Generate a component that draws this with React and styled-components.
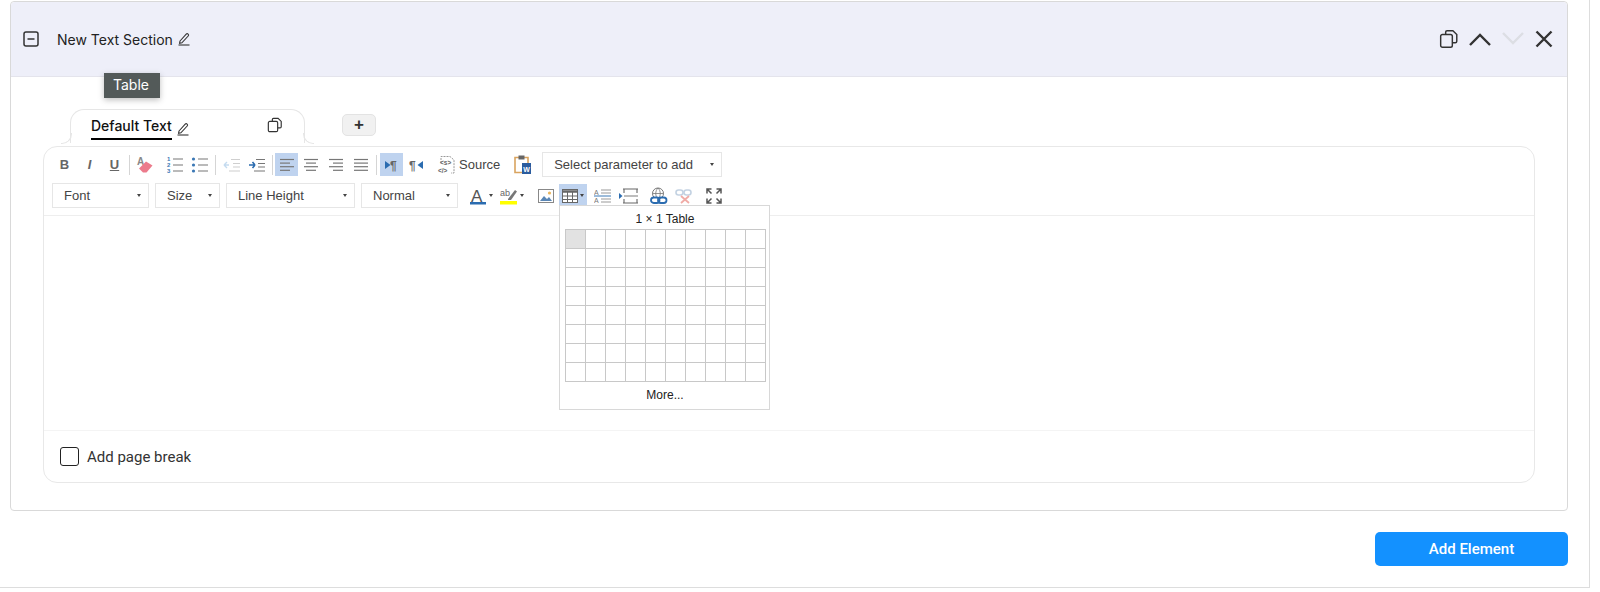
import React from "react";
import styled, { createGlobalStyle } from "styled-components";

const GlobalStyle = createGlobalStyle`
  html, body { margin: 0; padding: 0; background: #fff; }
  body { font-family: Inter, "Liberation Sans", sans-serif; color: #222; }
  * { box-sizing: border-box; }
`;

const PencilIcon = () => (
  <svg width="14" height="14" viewBox="0 0 14 14" fill="none" stroke="#333" strokeWidth="1.1">
    <path d="M3 9 9.2 2.2a1.3 1.3 0 0 1 2 1.8L4.9 10.8 2.6 11.2z" />
    <path d="M1.5 13h11" />
  </svg>
);

const CopyIcon = ({ size = 20 }) => (
  <svg width={size} height={size} viewBox="0 0 18 18" fill="none" stroke="#333" strokeWidth="1.3">
    <path d="M6 5V2.8A1.3 1.3 0 0 1 7.3 1.5h5.2L16 5v6a1.3 1.3 0 0 1-1.3 1.3H12" />
    <rect x="1.5" y="5" width="10.5" height="11.5" rx="1.6" />
  </svg>
);

const Chevron = ({ up, color }) => (
  <svg width="24" height="14" viewBox="0 0 24 14" fill="none" stroke={color} strokeWidth="2.4">
    <path d={up ? "M2 13 12 3l10 10" : "M2 1l10 10L22 1"} />
  </svg>
);

const CloseIcon = () => (
  <svg width="20" height="20" viewBox="0 0 20 20" fill="none" stroke="#333" strokeWidth="2.4">
    <path d="M2.5 2.5l15 15M17.5 2.5l-15 15" />
  </svg>
);

const CollapseIcon = () => (
  <svg width="16" height="16" viewBox="0 0 16 16" fill="none" stroke="#333" strokeWidth="1.5">
    <rect x="1" y="1" width="14" height="14" rx="2" />
    <path d="M4.5 8h7" />
  </svg>
);

const Lines = ({ rows }) => (
  <svg width="16" height="16" viewBox="0 0 16 16" stroke="#777" strokeWidth="1.2">
    {rows.map(([a, b], i) => (
      <path key={i} d={`M${a} ${2.5 + i * 3.6}H${b}`} />
    ))}
  </svg>
);

const EraserIcon = () => (
  <svg width="18" height="18" viewBox="0 0 18 18">
    <text x="1" y="9" fontSize="10" fontWeight="700" fill="#888" fontFamily="Liberation Sans">A</text>
    <path d="M3 12.5l7-7 6.5 4-6 7H7z" fill="#ec7b8c" />
  </svg>
);

const OrderedIcon = () => (
  <svg width="18" height="18" viewBox="0 0 18 18" stroke="#777" strokeWidth="1.2">
    <path d="M7 3h10M7 9h10M7 15h10" />
    <g fontSize="6" fontWeight="700" fill="#3b78b5" stroke="none" fontFamily="Liberation Sans">
      <text x="1" y="5">1</text>
      <text x="1" y="11">2</text>
      <text x="1" y="17">3</text>
    </g>
  </svg>
);

const BulletIcon = () => (
  <svg width="18" height="18" viewBox="0 0 18 18" stroke="#777" strokeWidth="1.2">
    <path d="M7 3h10M7 9h10M7 15h10" />
    <circle cx="2.5" cy="3" r="1.6" fill="#3b78b5" stroke="none" />
    <circle cx="2.5" cy="9" r="1.6" fill="#3b78b5" stroke="none" />
    <circle cx="2.5" cy="15" r="1.6" fill="#3b78b5" stroke="none" />
  </svg>
);

const IndentIcon = ({ out }) => (
  <svg width="18" height="16" viewBox="0 0 18 16" opacity={out ? 0.35 : 1}>
    <path d="M8 2.5h9M10 6.5h7M10 10h7M6 14h11" stroke="#777" strokeWidth="1.2" />
    {out ? (
      <path d="M6 8H1M1 8l3-3M1 8l3 3" stroke="#5a9bd5" strokeWidth="1.4" fill="none" />
    ) : (
      <path d="M1 8h6M7 8L4.5 5M7 8l-2.5 3" stroke="#2b6cb0" strokeWidth="1.6" fill="none" />
    )}
  </svg>
);

const BidiIcon = ({ rtl }) => (
  <svg width="16" height="16" viewBox="0 0 16 16">
    <text x={rtl ? 1 : 6} y="12.5" fontSize="12" fontWeight="700" fill="#666" fontFamily="Liberation Sans">¶</text>
    <path d={rtl ? "M15 4v8L9.5 8z" : "M1 4v8l5.5-4z"} fill="#2b6cb0" />
  </svg>
);

const SourceIcon = () => (
  <svg width="20" height="20" viewBox="0 0 20 20" fill="none" stroke="#999">
    <path d="M4 8V1.5h9L17 5v13H14" strokeDasharray="2 1" />
    <g fontSize="6.5" fontWeight="700" fill="#666" stroke="none" fontFamily="Liberation Sans">
      <text x="3" y="9.5">&lt;s&gt;</text>
      <text x="1" y="18">&lt;/&gt;</text>
    </g>
  </svg>
);

const PasteWordIcon = () => (
  <svg width="20" height="21" viewBox="0 0 20 21">
    <path d="M2 3.5h13v15H2z" fill="#fff" stroke="#d9a45f" strokeWidth="1.6" />
    <path d="M5.5 1.5h6v4h-6z" fill="#666" />
    <rect x="9" y="9" width="9" height="11" fill="#2b5c9e" />
    <text x="10.3" y="17.5" fontSize="7" fontWeight="700" fill="#fff" fontFamily="Liberation Sans">W</text>
  </svg>
);

const Caret = styled.span`
  display: inline-block;
  width: 0;
  height: 0;
  border-left: 2.5px solid transparent;
  border-right: 2.5px solid transparent;
  border-top: 3px solid #444;
`;

const TextColorIcon = () => (
  <svg width="18" height="18" viewBox="0 0 18 18">
    <text x="2" y="14.5" fontSize="17" fill="#555" fontFamily="Liberation Sans">A</text>
    <rect x="1" y="15" width="16" height="2.5" fill="#2b6cb0" />
  </svg>
);

const BgColorIcon = () => (
  <svg width="18" height="18" viewBox="0 0 18 18">
    <text x="0" y="9" fontSize="9" fill="#666" fontFamily="Liberation Sans">ab</text>
    <path d="M8 12 15 3l2 1.5L11 13H8z" fill="#777" />
    <rect x="0" y="14" width="17" height="3.5" fill="#ffff00" />
  </svg>
);

const ImageIcon = () => (
  <svg width="16" height="16" viewBox="0 0 16 16">
    <rect x=".5" y="1.5" width="15" height="13" fill="#fff" stroke="#888" />
    <path d="M2 13l4-5 3 3 2-2 3 4z" fill="#5a86b5" />
    <circle cx="11.5" cy="5" r="1.6" fill="#e9b65f" />
  </svg>
);

const TableIcon = () => (
  <svg width="16" height="14" viewBox="0 0 16 14" fill="none" stroke="#666">
    <rect x=".5" y=".5" width="15" height="13" fill="#fff" />
    <path d="M.5 2.5h15" strokeWidth="2.5" />
    <path d="M.5 7h15M.5 10.5h15M5.5 3v10M10.5 3v10" />
  </svg>
);

const LineHeightIcon = () => (
  <svg width="18" height="16" viewBox="0 0 18 16">
    <text x="0" y="7" fontSize="7" fill="#777" fontFamily="Liberation Sans">A</text>
    <text x="0" y="15" fontSize="7" fill="#777" fontFamily="Liberation Sans">A</text>
    <path d="M7 2h10M7 5h10M7 11h10M7 14h10" stroke="#999" />
    <path d="M0 8h17" stroke="#3b78b5" />
  </svg>
);

const PageBreakIcon = () => (
  <svg width="20" height="16" viewBox="0 0 20 16" fill="none" stroke="#666" strokeWidth="1.1">
    <path d="M4 1h15M4 15h15M5 1v4M18 1v4M5 11v4M18 11v4" />
    <path d="M0 5v6l3.5-3z" fill="#2b6cb0" stroke="none" />
    <path d="M5 8h14" stroke="#888" />
  </svg>
);

const LinkIcon = () => (
  <svg width="18" height="18" viewBox="0 0 18 18" fill="none">
    <circle cx="8" cy="6.5" r="5.5" stroke="#777" />
    <path d="M2.5 6.5h11M8 1c-3 3-3 8 0 11M8 1c3 3 3 8 0 11" stroke="#777" strokeWidth=".8" />
    <rect x="1" y="10.5" width="8.5" height="5.5" rx="2.7" stroke="#2b6cb0" strokeWidth="1.8" fill="#fff" />
    <rect x="8" y="10.5" width="8.5" height="5.5" rx="2.7" stroke="#2b6cb0" strokeWidth="1.8" />
  </svg>
);

const UnlinkIcon = () => (
  <svg width="18" height="16" viewBox="0 0 18 16" fill="none" opacity=".45">
    <rect x="1" y="2" width="7" height="5" rx="2.5" stroke="#7c9cc0" strokeWidth="1.6" />
    <rect x="9" y="2" width="7" height="5" rx="2.5" stroke="#7c9cc0" strokeWidth="1.6" />
    <path d="M6 8l8 7M14 8l-8 7" stroke="#e0473c" strokeWidth="1.8" />
  </svg>
);

const MaximizeIcon = () => (
  <svg width="16" height="16" viewBox="0 0 16 16" fill="none" stroke="#555" strokeWidth="1.5">
    <path d="M1 5.5V1h4.5M1 1l4.5 4.5M15 5.5V1h-4.5M15 1l-4.5 4.5M1 10.5V15h4.5M1 15l4.5-4.5M15 10.5V15h-4.5M15 15l-4.5-4.5" />
  </svg>
);

export default function App() {
  return (
    <Page>
      <GlobalStyle />
      <Section>
        <Header>
          <HeaderLeft>
            <CollapseIcon />
            <SectionTitle>New Text Section</SectionTitle>
            <PencilIcon />
          </HeaderLeft>
          <HeaderActions>
            <CopyIcon />
            <Chevron up color="#333" />
            <Chevron color="#dcdee4" />
            <CloseIcon />
          </HeaderActions>
        </Header>
        <Tooltip>Table</Tooltip>
        <SectionBody>
          <TabRow>
            <Tab>
              <TabLabel>
                <TabName>Default Text</TabName>
                <PencilIcon />
              </TabLabel>
              <CopyIcon size={16} />
            </Tab>
            <AddTab>+</AddTab>
          </TabRow>
          <Editor>
            <Toolbar>
              <ToolRow>
                <ToolBtn><LetterB>B</LetterB></ToolBtn>
                <ToolBtn><LetterI>I</LetterI></ToolBtn>
                <ToolBtn><LetterU>U</LetterU></ToolBtn>
                <Sep $gap={2} />
                <ToolBtn><EraserIcon /></ToolBtn>
                <ToolBtn $ml={5}><OrderedIcon /></ToolBtn>
                <ToolBtn><BulletIcon /></ToolBtn>
                <Sep $gap={3} />
                <ToolBtn><IndentIcon out /></ToolBtn>
                <ToolBtn><IndentIcon /></ToolBtn>
                <Sep $gap={2.5} />
                <ToolBtn $active $w={23}><Lines rows={[[1, 15], [1, 11], [1, 15], [1, 11]]} /></ToolBtn>
                <ToolBtn><Lines rows={[[1, 15], [3, 13], [1, 15], [3, 13]]} /></ToolBtn>
                <ToolBtn><Lines rows={[[1, 15], [5, 15], [1, 15], [5, 15]]} /></ToolBtn>
                <ToolBtn><Lines rows={[[1, 15], [1, 15], [1, 15], [1, 15]]} /></ToolBtn>
                <Sep $gap={3} />
                <ToolBtn $active $w={23}><BidiIcon /></ToolBtn>
                <ToolBtn><BidiIcon rtl /></ToolBtn>
                <SourceBtn><SourceIcon />Source</SourceBtn>
                <ToolBtn $ml={10}><PasteWordIcon /></ToolBtn>
                <Combo $width={180} $ml={7} $pad={11}>Select parameter to add<Caret /></Combo>
              </ToolRow>
              <ToolRow>
                <Combo $width={97} $pad={11}>Font<Caret /></Combo>
                <Combo $width={65} $ml={6} $pad={11}>Size<Caret /></Combo>
                <Combo $width={129} $ml={6} $pad={11}>Line Height<Caret /></Combo>
                <Combo $width={97} $ml={6} $pad={11}>Normal<Caret /></Combo>
                <WideBtn $ml={9}><TextColorIcon /><Caret /></WideBtn>
                <WideBtn $ml={3}><BgColorIcon /><Caret /></WideBtn>
                <ToolBtn $ml={7}><ImageIcon /></ToolBtn>
                <WideBtn $active $ml={1}><TableIcon /><Caret /></WideBtn>
                <ToolBtn $ml={3}><LineHeightIcon /></ToolBtn>
                <ToolBtn $ml={1}><PageBreakIcon /></ToolBtn>
                <ToolBtn $ml={5}><LinkIcon /></ToolBtn>
                <ToolBtn><UnlinkIcon /></ToolBtn>
                <ToolBtn $ml={5}><MaximizeIcon /></ToolBtn>
              </ToolRow>
            </Toolbar>
            <EditArea />
            <EditorFooter>
              <Checkbox />
              Add page break
            </EditorFooter>
            <TablePicker>
              <PickerTitle>1 × 1 Table</PickerTitle>
              <PickerGrid>
                {Array.from({ length: 80 }, (_, i) => (
                  <PickerCell key={i} $on={i === 0} />
                ))}
              </PickerGrid>
              <PickerMore>More...</PickerMore>
            </TablePicker>
          </Editor>
        </SectionBody>
      </Section>
      <Actions>
        <AddElement>Add Element</AddElement>
      </Actions>
    </Page>
  );
}

const Page = styled.div`
  width: 1590px;
  height: 588px;
  padding: 1px 21px 0 10px;
  border-right: 1px solid #ddd;
  border-bottom: 1px solid #ddd;
`;

const Section = styled.section`
  position: relative;
  height: 510px;
  border: 1px solid #d9d9d9;
  border-radius: 4px;
`;

const Header = styled.div`
  display: flex;
  align-items: center;
  justify-content: space-between;
  height: 75px;
  padding: 0 13px 0 12px;
  background: #eeeff9;
  border-bottom: 1px solid #e4e4ec;
  border-radius: 4px 4px 0 0;
`;

const HeaderLeft = styled.div`
  display: flex;
  align-items: center;
`;

const SectionTitle = styled.span`
  margin: 0 4px 0 18px;
  font-size: 14px;
  color: #222;
`;

const HeaderActions = styled.div`
  display: flex;
  align-items: center;
  gap: 9px;
`;

const Tooltip = styled.div`
  position: absolute;
  left: 93px;
  top: 71px;
  width: 56px;
  height: 25px;
  padding-right: 2px;
  background: #535a59;
  color: #fff;
  font-size: 14px;
  line-height: 23px;
  text-align: center;
  box-shadow: 0 2px 6px rgba(0, 0, 0, 0.25);
`;

const SectionBody = styled.div`
  padding: 32px 0 0 32px;
`;

const TabRow = styled.div`
  display: flex;
  align-items: flex-start;
  height: 37px;
  padding-left: 27px;
`;

const Tab = styled.div`
  position: relative;
  display: flex;
  align-items: flex-start;
  justify-content: space-between;
  width: 235px;
  height: 34px;
  padding: 7px 21px 0 20px;
  border: 1px solid #e6e6e6;
  border-bottom: none;
  border-radius: 14px 14px 0 0;

  &::before,
  &::after {
    content: "";
    position: absolute;
    bottom: -1px;
    width: 10px;
    height: 10px;
    border-bottom: 1px solid #e6e6e6;
  }
  &::before {
    left: -10px;
    border-right: 1px solid #e6e6e6;
    border-bottom-right-radius: 10px;
  }
  &::after {
    right: -10px;
    border-left: 1px solid #e6e6e6;
    border-bottom-left-radius: 10px;
  }
`;

const TabLabel = styled.div`
  display: flex;
  align-items: center;
  gap: 4px;
`;

const TabName = styled.span`
  font-size: 14px;
  font-weight: 500;
  color: #111;
  padding-bottom: 4px;
  border-bottom: 2px solid #000;
`;

const AddTab = styled.button`
  width: 34px;
  height: 22px;
  margin: 5px 0 0 37px;
  padding: 0;
  border: 1px solid #e3e3e3;
  border-radius: 5px;
  background: #f1f1f1;
  color: #333;
  font: 700 17px/18px "Liberation Sans", sans-serif;
`;

const Editor = styled.div`
  position: relative;
  width: 1492px;
  height: 337px;
  border: 1px solid #e8e8e8;
  border-radius: 14px;
`;

const Toolbar = styled.div`
  display: flex;
  flex-direction: column;
  gap: 6px;
  height: 69px;
  padding: 5px 8px 0;
  border-bottom: 1px solid #eee;
  font-family: "Liberation Sans", Arial, sans-serif;
`;

const ToolRow = styled.div`
  display: flex;
  align-items: center;
  height: 25px;
`;

const ToolBtn = styled.div`
  display: flex;
  align-items: center;
  justify-content: center;
  flex: none;
  width: ${(p) => p.$w || 25}px;
  height: 23px;
  margin-left: ${(p) => p.$ml || 0}px;
  background: ${(p) => (p.$active ? "#bfd3ef" : "transparent")};
`;

const WideBtn = styled(ToolBtn)`
  width: 28px;
  gap: 2px;
`;

const LetterB = styled.span`
  font-weight: 700;
  font-size: 13px;
  color: #666;
`;

const LetterI = styled(LetterB)`
  font-style: italic;
`;

const LetterU = styled(LetterB)`
  text-decoration: underline;
`;

const Sep = styled.span`
  flex: none;
  width: 1px;
  height: 20px;
  margin: 0 ${(p) => p.$gap}px;
  background: #d5d5d5;
`;

const SourceBtn = styled.div`
  display: flex;
  align-items: center;
  gap: 2px;
  margin-left: 9px;
  font-size: 13px;
  color: #444;
`;

const Combo = styled.div`
  display: flex;
  align-items: center;
  justify-content: space-between;
  flex: none;
  width: ${(p) => p.$width}px;
  height: 25px;
  margin-left: ${(p) => p.$ml || 0}px;
  padding: 0 7px 0 ${(p) => p.$pad}px;
  border: 1px solid #e6e6e6;
  font-size: 13px;
  color: #444;
  background: #fff;
`;

const EditArea = styled.div`
  height: 215px;
  border-bottom: 1px solid #f4f4f4;
`;

const EditorFooter = styled.label`
  display: flex;
  align-items: center;
  gap: 8px;
  height: 51px;
  padding: 0 16px;
  font-size: 15px;
  color: #333;
  font-family: Roboto, sans-serif;
`;

const Checkbox = styled.span`
  width: 19px;
  height: 19px;
  border: 1.5px solid #222;
  border-radius: 3px;
`;

const TablePicker = styled.div`
  position: absolute;
  left: 515px;
  top: 58px;
  width: 211px;
  height: 205px;
  padding: 0 4px 0 5px;
  background: #fff;
  border: 1px solid #d8d8d8;
  font-family: "Liberation Sans", Arial, sans-serif;
  color: #222;
`;

const PickerTitle = styled.div`
  height: 23px;
  font-size: 12px;
  line-height: 27px;
  text-align: center;
`;

const PickerGrid = styled.div`
  display: grid;
  grid-template-columns: repeat(10, 20px);
  grid-auto-rows: 19px;
  padding: 0 1px 1px 0;
`;

const PickerCell = styled.div`
  margin: 0 -1px -1px 0;
  border: 1px solid #c8c8c8;
  background: ${(p) => (p.$on ? "#e2e2e2" : "#fff")};
`;

const PickerMore = styled.div`
  margin-top: 6px;
  font-size: 12px;
  line-height: 14px;
  text-align: center;
`;

const Actions = styled.div`
  display: flex;
  justify-content: flex-end;
  margin-top: 21px;
`;

const AddElement = styled.button`
  width: 193px;
  height: 34px;
  border: none;
  border-radius: 5px;
  background: #1391ff;
  color: #fff;
  font: 500 15px Roboto, sans-serif;
`;
